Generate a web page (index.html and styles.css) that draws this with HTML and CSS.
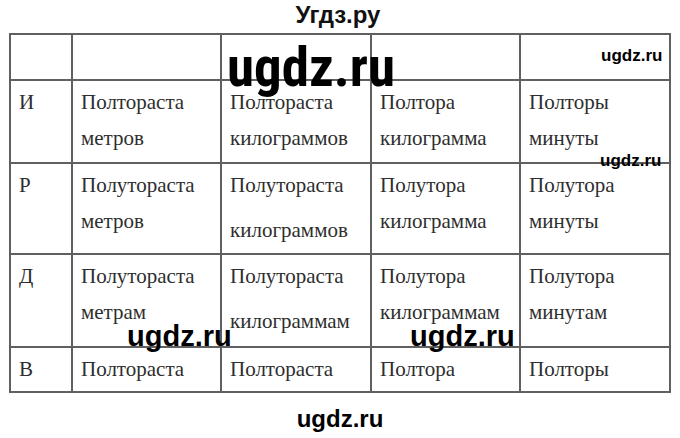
FILE: index.html
```html
<!DOCTYPE html>
<html lang="ru">
<head>
<meta charset="utf-8">
<title>Угдз.ру</title>
<link rel="stylesheet" href="styles.css">
</head>
<body>
<div class="page">
  <div class="title">Угдз.ру</div>
  <table class="grid">
    <colgroup>
      <col class="c1"><col class="c2"><col class="c3"><col class="c4"><col class="c5">
    </colgroup>
    <tr class="r0"><td></td><td></td><td></td><td></td><td></td></tr>
    <tr class="r1">
      <td><div class="ln">И</div></td>
      <td><div class="ln">Полтораста</div><div class="ln">метров</div></td>
      <td><div class="ln">Полтораста</div><div class="ln">килограммов</div></td>
      <td><div class="ln">Полтора</div><div class="ln">килограмма</div></td>
      <td><div class="ln">Полторы</div><div class="ln">минуты</div></td>
    </tr>
    <tr class="r2">
      <td><div class="ln">Р</div></td>
      <td><div class="ln">Полутораста</div><div class="ln">метров</div></td>
      <td><div class="ln">Полутораста</div><div class="ln low">килограммов</div></td>
      <td><div class="ln">Полутора</div><div class="ln">килограмма</div></td>
      <td><div class="ln">Полутора</div><div class="ln">минуты</div></td>
    </tr>
    <tr class="r3">
      <td><div class="ln">Д</div></td>
      <td><div class="ln">Полутораста</div><div class="ln">метрам</div></td>
      <td><div class="ln">Полутораста</div><div class="ln low">килограммам</div></td>
      <td><div class="ln">Полутора</div><div class="ln">килограммам</div></td>
      <td><div class="ln">Полутора</div><div class="ln">минутам</div></td>
    </tr>
    <tr class="r4">
      <td><div class="ln">В</div></td>
      <td><div class="ln">Полтораста</div></td>
      <td><div class="ln">Полтораста</div></td>
      <td><div class="ln">Полтора</div></td>
      <td><div class="ln">Полторы</div></td>
    </tr>
  </table>
  <div class="footer">ugdz.ru</div>

  <div class="wm wm-big">ugdz.ru</div>
  <div class="wm wm-small wm-top">ugdz.ru</div>
  <div class="wm wm-small wm-mid">ugdz.ru</div>
  <div class="wm wm-med wm-left">ugdz.ru</div>
  <div class="wm wm-med wm-right">ugdz.ru</div>
</div>
</body>
</html>
```

FILE: styles.css
```css
html, body {
  margin: 0;
  padding: 0;
  background: #ffffff;
  font-family: "Liberation Serif", serif;
}

.page {
  position: relative;
  width: 680px;
  height: 438px;
  overflow: hidden;
}

.title {
  height: 33px;
  text-align: center;
  font-family: "Liberation Sans", sans-serif;
  font-weight: bold;
  font-size: 24px;
  line-height: 30px;
  color: #111;
  padding-right: 4px;
}

.grid {
  margin-left: 9px;
  border-collapse: collapse;
  table-layout: fixed;
  width: 660px;
}

.c1 { width: 62px; }
.c2 { width: 149px; }
.c3 { width: 150px; }
.c4 { width: 149px; }
.c5 { width: 150px; }

.grid td {
  border: 2px solid #606060;
  vertical-align: top;
  padding: 3px 8px 0 8px;
  box-sizing: border-box;
  font-family: "Liberation Serif", serif;
  font-size: 21px;
  color: #2e2e2e;
}

.r0 td { height: 46px; }
.r1 td { height: 83px; }
.r2 td { height: 91px; }
.r3 td { height: 93px; }
.r4 td { height: 45px; }

.ln {
  line-height: 36px;
  white-space: nowrap;
}

.ln.low {
  padding-top: 9px;
}

.footer {
  text-align: center;
  font-family: "Liberation Sans", sans-serif;
  font-weight: bold;
  font-size: 24px;
  line-height: 28px;
  margin-top: 12px;
  color: #000;
}

.wm {
  position: absolute;
  font-family: "Liberation Sans", sans-serif;
  font-weight: bold;
  color: #000;
  line-height: 1;
  white-space: nowrap;
}

.wm-big {
  left: 227px;
  top: 40px;
  font-family: "Roboto Condensed", sans-serif;
  font-size: 55px;
}

.wm-small {
  font-size: 17px;
}

.wm-top { left: 601px; top: 47px; }
.wm-mid { left: 600px; top: 152px; }

.wm-med {
  font-size: 29px;
}

.wm-left { left: 127px; top: 322px; }
.wm-right { left: 410px; top: 322px; }
```
